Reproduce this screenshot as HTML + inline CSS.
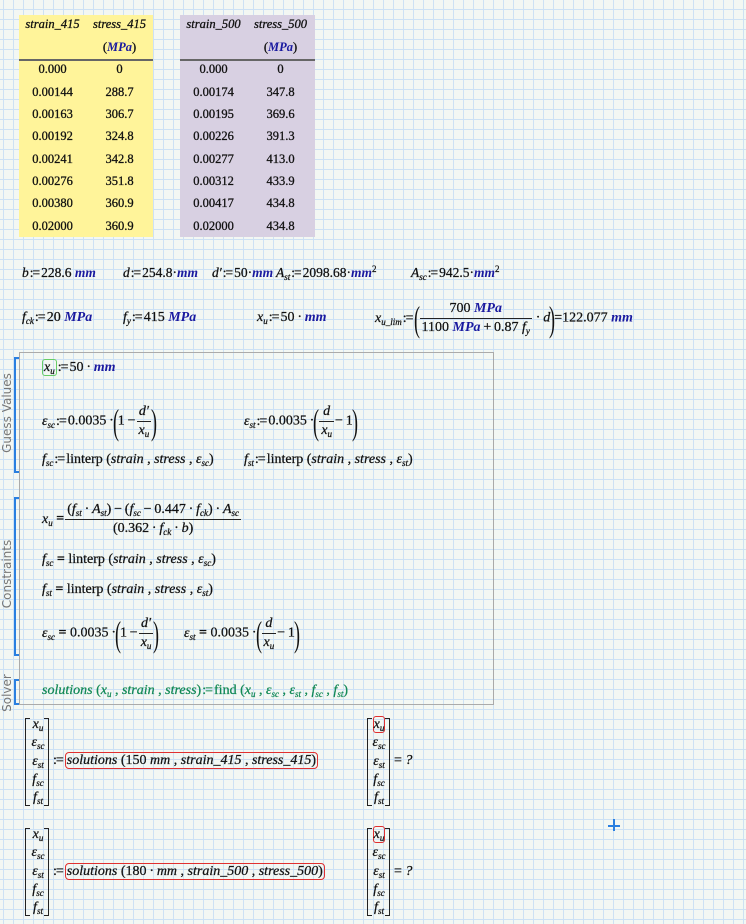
<!DOCTYPE html>
<html><head><meta charset="utf-8"><style>
html,body{margin:0;padding:0}
body{width:746px;height:924px;position:relative;overflow:hidden;background-color:#f3f7f3;
background-image:linear-gradient(to right,#cde1f4 1px,transparent 1px),linear-gradient(to bottom,#cde1f4 1px,transparent 1px);
background-size:10px 10px;background-position:3px 9px;font-family:"Liberation Serif",serif;color:#111}
.t{position:absolute;white-space:nowrap;font-size:14px;line-height:16px;-webkit-text-stroke:0.25px #111}
i{font-style:italic}
.u{color:#1a1aa0;font-weight:bold;font-style:italic;-webkit-text-stroke:0}
sub{font-size:9px;vertical-align:-3px;font-style:italic;line-height:0}
sup{font-size:9px;vertical-align:5px;line-height:0}
.a{letter-spacing:-1px;margin:0 2px 0 1px}
.fr{display:inline-block;vertical-align:middle;text-align:center;margin:0 1px}
.fr>span{display:block;line-height:18px;padding:0 2px}
.fr>span+span{border-top:1px solid #222}
.bp{display:inline-block;vertical-align:middle;font-size:36px;line-height:36px;transform:scaleX(.5);-webkit-text-stroke:0;margin:0 -4px}
.tab{position:absolute;font-size:12.5px;-webkit-text-stroke:0.3px #111}
.tab div{position:absolute;width:67px;text-align:center;white-space:nowrap}
.g{color:#118855;-webkit-text-stroke:0.25px #118855}
.lbl{position:absolute;font-family:"DejaVu Sans",sans-serif;font-size:12px;color:#777;transform:rotate(-90deg);transform-origin:center;white-space:nowrap;text-align:center}
.br{position:absolute;border:2px solid #2a7fe0;border-right:none;width:3px}
.mb{position:absolute;border:1.5px solid #222;width:4px}
.mt{position:absolute;font-size:14px;text-align:center;font-style:italic;-webkit-text-stroke:0.25px #111}
.mt div{height:18.3px;line-height:18px}
.row1{font-size:13.5px}
</style></head><body>

<div style="position:absolute;left:19px;top:15px;width:134px;height:222px;background:#fff49a"></div>
<div style="position:absolute;left:180px;top:15px;width:135px;height:222px;background:#d8d0e2"></div>
<div style="position:absolute;left:19px;top:59px;width:134px;height:2px;background:#666"></div>
<div style="position:absolute;left:180px;top:59px;width:135px;height:2px;background:#666"></div>
<div class="tab" style="left:19px;top:0">
<div style="left:0;top:17px"><i>strain_415</i></div><div style="left:67px;top:17px"><i>stress_415</i></div>
<div style="left:67px;top:40px">(<span class="u">MPa</span>)</div>
<div style="left:0;top:62px">0.000</div><div style="left:67px;top:62px">0</div>
<div style="left:0;top:85px">0.00144</div><div style="left:67px;top:85px">288.7</div>
<div style="left:0;top:107px">0.00163</div><div style="left:67px;top:107px">306.7</div>
<div style="left:0;top:129px">0.00192</div><div style="left:67px;top:129px">324.8</div>
<div style="left:0;top:152px">0.00241</div><div style="left:67px;top:152px">342.8</div>
<div style="left:0;top:174px">0.00276</div><div style="left:67px;top:174px">351.8</div>
<div style="left:0;top:196px">0.00380</div><div style="left:67px;top:196px">360.9</div>
<div style="left:0;top:219px">0.02000</div><div style="left:67px;top:219px">360.9</div>
</div>
<div class="tab" style="left:180px;top:0">
<div style="left:0;top:17px"><i>strain_500</i></div><div style="left:67px;top:17px"><i>stress_500</i></div>
<div style="left:67px;top:40px">(<span class="u">MPa</span>)</div>
<div style="left:0;top:62px">0.000</div><div style="left:67px;top:62px">0</div>
<div style="left:0;top:85px">0.00174</div><div style="left:67px;top:85px">347.8</div>
<div style="left:0;top:107px">0.00195</div><div style="left:67px;top:107px">369.6</div>
<div style="left:0;top:129px">0.00226</div><div style="left:67px;top:129px">391.3</div>
<div style="left:0;top:152px">0.00277</div><div style="left:67px;top:152px">413.0</div>
<div style="left:0;top:174px">0.00312</div><div style="left:67px;top:174px">433.9</div>
<div style="left:0;top:196px">0.00417</div><div style="left:67px;top:196px">434.8</div>
<div style="left:0;top:219px">0.02000</div><div style="left:67px;top:219px">434.8</div>
</div>

<div class="t row1" style="left:22px;top:265px"><i>b</i><span class="a">:=</span>228.6 <span class="u">mm</span></div>
<div class="t row1" style="left:123px;top:265px"><i>d</i><span class="a">:=</span>254.8·<span class="u">mm</span></div>
<div class="t row1" style="left:212px;top:265px"><i>d′</i><span class="a">:=</span>50·<span class="u">mm</span></div>
<div class="t row1" style="left:276px;top:265px"><i>A<sub>st</sub></i><span class="a">:=</span>2098.68·<span class="u">mm</span><sup>2</sup></div>
<div class="t row1" style="left:411px;top:265px"><i>A<sub>sc</sub></i><span class="a">:=</span>942.5·<span class="u">mm</span><sup>2</sup></div>

<div class="t" style="left:22px;top:310px"><i>f<sub>ck</sub></i><span class="a">:=</span>20 <span class="u">MPa</span></div>
<div class="t" style="left:123px;top:310px"><i>f<sub>y</sub></i><span class="a">:=</span>415 <span class="u">MPa</span></div>
<div class="t" style="left:257px;top:310px"><i>x<sub>u</sub></i><span class="a">:=</span>50&thinsp;·&thinsp;<span class="u">mm</span></div>
<div class="t" style="left:375px;top:300px"><i>x<sub>u_lim</sub></i><span class="a">:=</span><span class="bp">(</span><span class="fr"><span>700 <span class="u">MPa</span></span><span>1100 <span class="u">MPa</span>&thinsp;+&thinsp;0.87 <i>f<sub>y</sub></i></span></span>&thinsp;·&thinsp;<i>d</i><span class="bp">)</span>=122.077 <span class="u">mm</span></div>

<div style="position:absolute;left:19px;top:352px;width:473px;height:351px;border:1px solid #aaa"></div>
<div class="br" style="left:14px;top:357px;height:112px"></div>
<div class="br" style="left:14px;top:497px;height:155px"></div>
<div class="br" style="left:14px;top:679px;height:22px"></div>
<div class="lbl" style="left:-33px;top:406px;width:80px">Guess Values</div>
<div class="lbl" style="left:-33px;top:567px;width:80px">Constraints</div>
<div class="lbl" style="left:-13px;top:686px;width:40px">Solver</div>

<div class="t" style="left:42px;top:360px"><span style="border:1.5px solid #66cc66;border-radius:3px;padding:0 1px"><i>x<sub>u</sub></i></span><span class="a">:=</span>50&thinsp;·&thinsp;<span class="u">mm</span></div>
<div class="t" style="left:42px;top:403px"><i>ε<sub>sc</sub></i><span class="a">:=</span>0.0035&thinsp;·<span class="bp">(</span>1&thinsp;−<span class="fr"><span><i>d′</i></span><span><i>x<sub>u</sub></i></span></span><span class="bp">)</span></div>
<div class="t" style="left:244px;top:403px"><i>ε<sub>st</sub></i><span class="a">:=</span>0.0035&thinsp;·<span class="bp">(</span><span class="fr"><span><i>d</i></span><span><i>x<sub>u</sub></i></span></span>−&thinsp;1<span class="bp">)</span></div>
<div class="t" style="left:42px;top:452px"><i>f<sub>sc</sub></i><span class="a">:=</span>linterp (<i>strain</i> , <i>stress</i> , <i>ε<sub>sc</sub></i>)</div>
<div class="t" style="left:244px;top:452px"><i>f<sub>st</sub></i><span class="a">:=</span>linterp (<i>strain</i> , <i>stress</i> , <i>ε<sub>st</sub></i>)</div>

<div class="t" style="left:42px;top:501px"><i>x<sub>u</sub></i> <b>=</b><span class="fr"><span>(<i>f<sub>st</sub></i>&thinsp;·&thinsp;<i>A<sub>st</sub></i>)&thinsp;−&thinsp;(<i>f<sub>sc</sub></i>&thinsp;−&thinsp;0.447&thinsp;·&thinsp;<i>f<sub>ck</sub></i>)&thinsp;·&thinsp;<i>A<sub>sc</sub></i></span><span>(0.362&thinsp;·&thinsp;<i>f<sub>ck</sub></i>&thinsp;·&thinsp;<i>b</i>)</span></span></div>
<div class="t" style="left:42px;top:552px"><i>f<sub>sc</sub></i> <b>=</b> linterp (<i>strain</i> , <i>stress</i> , <i>ε<sub>sc</sub></i>)</div>
<div class="t" style="left:42px;top:582px"><i>f<sub>st</sub></i> <b>=</b> linterp (<i>strain</i> , <i>stress</i> , <i>ε<sub>st</sub></i>)</div>
<div class="t" style="left:42px;top:615px"><i>ε<sub>sc</sub></i> <b>=</b> 0.0035&thinsp;·<span class="bp">(</span>1&thinsp;−<span class="fr"><span><i>d′</i></span><span><i>x<sub>u</sub></i></span></span><span class="bp">)</span></div>
<div class="t" style="left:184px;top:615px"><i>ε<sub>st</sub></i> <b>=</b> 0.0035&thinsp;·<span class="bp">(</span><span class="fr"><span><i>d</i></span><span><i>x<sub>u</sub></i></span></span>−&thinsp;1<span class="bp">)</span></div>
<div class="t g" style="left:42px;top:683px"><i>solutions</i> (<i>x<sub>u</sub></i> , <i>strain</i> , <i>stress</i>)<span class="a">:=</span>find (<i>x<sub>u</sub></i> , <i>ε<sub>sc</sub></i> , <i>ε<sub>st</sub></i> , <i>f<sub>sc</sub></i> , <i>f<sub>st</sub></i>)</div>

<div class="mb" style="left:25px;top:718px;height:86px;border-right:none"></div>
<div class="mb" style="left:44px;top:718px;height:86px;border-left:none"></div>
<div class="mt" style="left:28px;top:716px;width:20px"><div>x<sub>u</sub></div><div>ε<sub>sc</sub></div><div>ε<sub>st</sub></div><div>f<sub>sc</sub></div><div>f<sub>st</sub></div></div>
<div class="t" style="left:52px;top:753px"><span class="a">:=</span><span style="border:1.5px solid #e03030;border-radius:4px;padding:0 1px"><i>solutions</i> (150 <i>mm</i> , <i>strain_415</i> , <i>stress_415</i>)</span></div>
<div class="mb" style="left:367px;top:718px;height:86px;border-right:none"></div>
<div class="mb" style="left:385px;top:718px;height:86px;border-left:none"></div>
<div class="mt" style="left:369px;top:716px;width:20px"><div><span style="border:1.5px solid #e03030;border-radius:3px">x<sub>u</sub></span></div><div>ε<sub>sc</sub></div><div>ε<sub>st</sub></div><div>f<sub>sc</sub></div><div>f<sub>st</sub></div></div>
<div class="t" style="left:394px;top:753px">= <i>?</i></div>

<div class="mb" style="left:25px;top:828px;height:86px;border-right:none"></div>
<div class="mb" style="left:44px;top:828px;height:86px;border-left:none"></div>
<div class="mt" style="left:28px;top:826px;width:20px"><div>x<sub>u</sub></div><div>ε<sub>sc</sub></div><div>ε<sub>st</sub></div><div>f<sub>sc</sub></div><div>f<sub>st</sub></div></div>
<div class="t" style="left:52px;top:864px"><span class="a">:=</span><span style="border:1.5px solid #e03030;border-radius:4px;padding:0 1px"><i>solutions</i> (180&thinsp;·&thinsp;<i>mm</i> , <i>strain_500</i> , <i>stress_500</i>)</span></div>
<div class="mb" style="left:367px;top:828px;height:86px;border-right:none"></div>
<div class="mb" style="left:385px;top:828px;height:86px;border-left:none"></div>
<div class="mt" style="left:369px;top:826px;width:20px"><div><span style="border:1.5px solid #e03030;border-radius:3px">x<sub>u</sub></span></div><div>ε<sub>sc</sub></div><div>ε<sub>st</sub></div><div>f<sub>sc</sub></div><div>f<sub>st</sub></div></div>
<div class="t" style="left:394px;top:864px">= <i>?</i></div>

<div style="position:absolute;left:608px;top:825px;width:12px;height:1.5px;background:#2a7fe0"></div>
<div style="position:absolute;left:613px;top:819px;width:1.5px;height:12px;background:#2a7fe0"></div>
</body></html>
